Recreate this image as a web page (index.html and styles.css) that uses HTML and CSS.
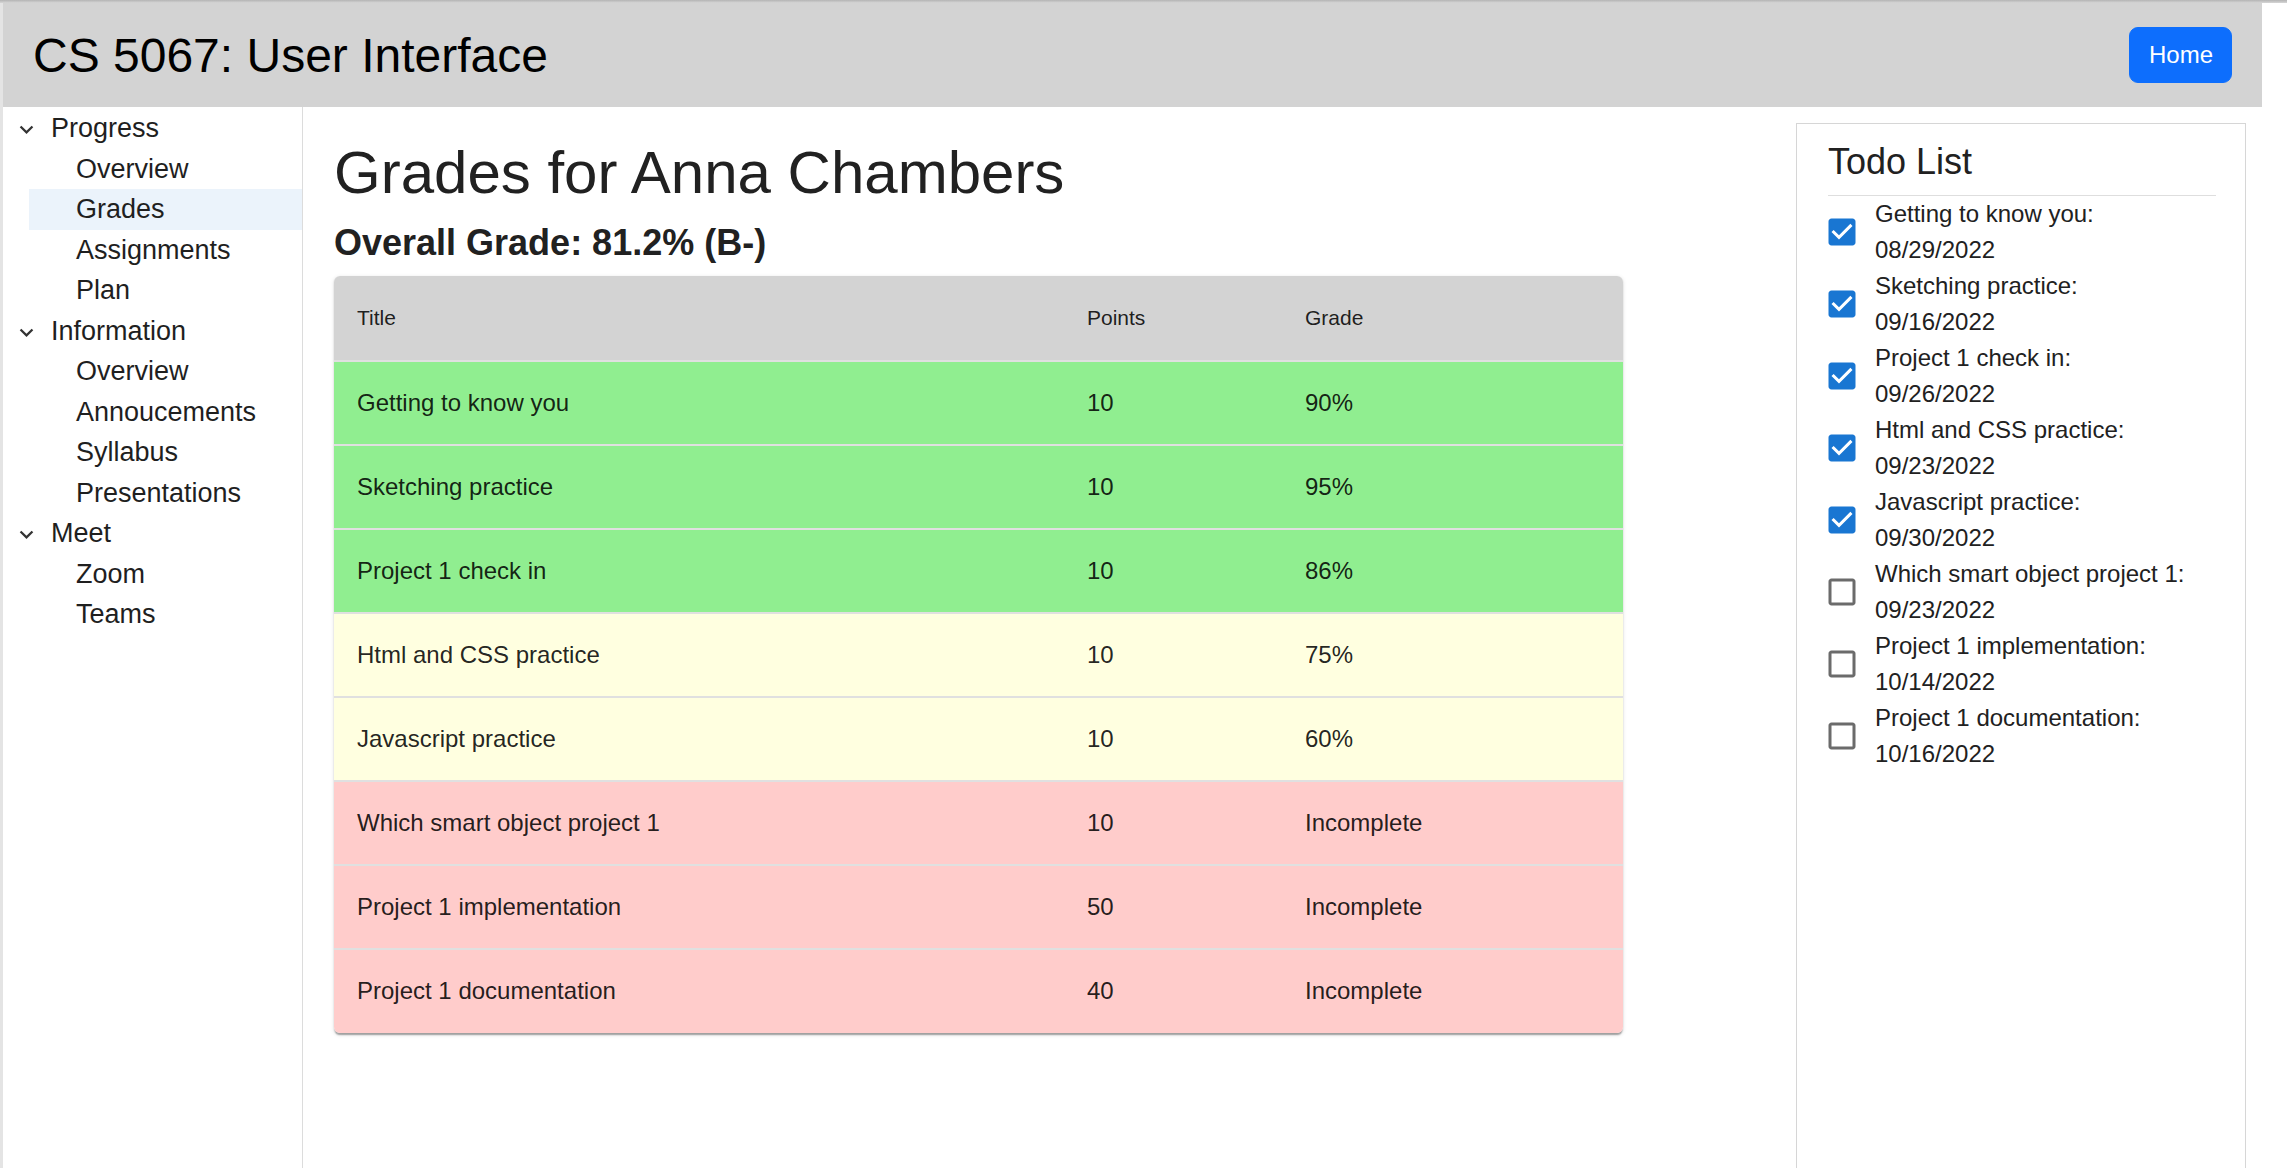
FILE: index.html
```html
<!DOCTYPE html>
<html lang="en">
<head>
<meta charset="utf-8">
<title>CS 5067: User Interface</title>
<link rel="stylesheet" href="styles.css">
</head>
<body>
<div class="topshade"></div>
<div class="frame">
  <div class="page">
    <header class="appbar">
      <h2 class="app-title">CS 5067: User Interface</h2>
      <button class="btn-home">Home</button>
    </header>
    <div class="layout">
      <nav class="sidebar">
        <div class="tree-group">
          <div class="tree-head"><svg class="chev" viewBox="0 0 24 24"><path d="M16.59 8.59 12 13.17 7.41 8.59 6 10l6 6 6-6z"/></svg><span>Progress</span></div>
          <div class="tree-item">Overview</div>
          <div class="tree-item selected">Grades</div>
          <div class="tree-item">Assignments</div>
          <div class="tree-item">Plan</div>
        </div>
        <div class="tree-group">
          <div class="tree-head"><svg class="chev" viewBox="0 0 24 24"><path d="M16.59 8.59 12 13.17 7.41 8.59 6 10l6 6 6-6z"/></svg><span>Information</span></div>
          <div class="tree-item">Overview</div>
          <div class="tree-item">Annoucements</div>
          <div class="tree-item">Syllabus</div>
          <div class="tree-item">Presentations</div>
        </div>
        <div class="tree-group">
          <div class="tree-head"><svg class="chev" viewBox="0 0 24 24"><path d="M16.59 8.59 12 13.17 7.41 8.59 6 10l6 6 6-6z"/></svg><span>Meet</span></div>
          <div class="tree-item">Zoom</div>
          <div class="tree-item">Teams</div>
        </div>
      </nav>
      <main class="content">
        <h1 class="page-title">Grades for Anna Chambers</h1>
        <h4 class="overall">Overall Grade: 81.2% (B-)</h4>
        <div class="paper">
          <table class="grades">
            <colgroup><col class="c1"><col class="c2"><col class="c3"></colgroup>
            <thead>
              <tr><th>Title</th><th>Points</th><th>Grade</th></tr>
            </thead>
            <tbody>
              <tr class="good"><td>Getting to know you</td><td>10</td><td>90%</td></tr>
              <tr class="good"><td>Sketching practice</td><td>10</td><td>95%</td></tr>
              <tr class="good"><td>Project 1 check in</td><td>10</td><td>86%</td></tr>
              <tr class="ok"><td>Html and CSS practice</td><td>10</td><td>75%</td></tr>
              <tr class="ok"><td>Javascript practice</td><td>10</td><td>60%</td></tr>
              <tr class="bad"><td>Which smart object project 1</td><td>10</td><td>Incomplete</td></tr>
              <tr class="bad"><td>Project 1 implementation</td><td>50</td><td>Incomplete</td></tr>
              <tr class="bad"><td>Project 1 documentation</td><td>40</td><td>Incomplete</td></tr>
            </tbody>
          </table>
        </div>
      </main>
      <aside class="todo">
        <h4 class="todo-title">Todo List</h4>
        <hr class="todo-rule">
        <ul class="todo-list">
          <li class="todo-item"><svg class="cb on" viewBox="0 0 24 24"><path d="M19 3H5c-1.11 0-2 .9-2 2v14c0 1.1.89 2 2 2h14c1.11 0 2-.9 2-2V5c0-1.1-.89-2-2-2zm-9 14l-5-5 1.41-1.41L10 14.17l7.59-7.59L19 8l-9 9z"/></svg><span class="todo-text"><span class="line">Getting to know you:</span><span class="line">08/29/2022</span></span></li>
          <li class="todo-item"><svg class="cb on" viewBox="0 0 24 24"><path d="M19 3H5c-1.11 0-2 .9-2 2v14c0 1.1.89 2 2 2h14c1.11 0 2-.9 2-2V5c0-1.1-.89-2-2-2zm-9 14l-5-5 1.41-1.41L10 14.17l7.59-7.59L19 8l-9 9z"/></svg><span class="todo-text"><span class="line">Sketching practice:</span><span class="line">09/16/2022</span></span></li>
          <li class="todo-item"><svg class="cb on" viewBox="0 0 24 24"><path d="M19 3H5c-1.11 0-2 .9-2 2v14c0 1.1.89 2 2 2h14c1.11 0 2-.9 2-2V5c0-1.1-.89-2-2-2zm-9 14l-5-5 1.41-1.41L10 14.17l7.59-7.59L19 8l-9 9z"/></svg><span class="todo-text"><span class="line">Project 1 check in:</span><span class="line">09/26/2022</span></span></li>
          <li class="todo-item"><svg class="cb on" viewBox="0 0 24 24"><path d="M19 3H5c-1.11 0-2 .9-2 2v14c0 1.1.89 2 2 2h14c1.11 0 2-.9 2-2V5c0-1.1-.89-2-2-2zm-9 14l-5-5 1.41-1.41L10 14.17l7.59-7.59L19 8l-9 9z"/></svg><span class="todo-text"><span class="line">Html and CSS practice:</span><span class="line">09/23/2022</span></span></li>
          <li class="todo-item"><svg class="cb on" viewBox="0 0 24 24"><path d="M19 3H5c-1.11 0-2 .9-2 2v14c0 1.1.89 2 2 2h14c1.11 0 2-.9 2-2V5c0-1.1-.89-2-2-2zm-9 14l-5-5 1.41-1.41L10 14.17l7.59-7.59L19 8l-9 9z"/></svg><span class="todo-text"><span class="line">Javascript practice:</span><span class="line">09/30/2022</span></span></li>
          <li class="todo-item"><svg class="cb off" viewBox="0 0 24 24"><path d="M19 5v14H5V5h14m0-2H5c-1.1 0-2 .9-2 2v14c0 1.1.9 2 2 2h14c1.1 0 2-.9 2-2V5c0-1.1-.9-2-2-2z"/></svg><span class="todo-text"><span class="line">Which smart object project 1:</span><span class="line">09/23/2022</span></span></li>
          <li class="todo-item"><svg class="cb off" viewBox="0 0 24 24"><path d="M19 5v14H5V5h14m0-2H5c-1.1 0-2 .9-2 2v14c0 1.1.9 2 2 2h14c1.1 0 2-.9 2-2V5c0-1.1-.9-2-2-2z"/></svg><span class="todo-text"><span class="line">Project 1 implementation:</span><span class="line">10/14/2022</span></span></li>
          <li class="todo-item"><svg class="cb off" viewBox="0 0 24 24"><path d="M19 5v14H5V5h14m0-2H5c-1.1 0-2 .9-2 2v14c0 1.1.9 2 2 2h14c1.1 0 2-.9 2-2V5c0-1.1-.9-2-2-2z"/></svg><span class="todo-text"><span class="line">Project 1 documentation:</span><span class="line">10/16/2022</span></span></li>
        </ul>
      </aside>
    </div>
  </div>
</div>
</body>
</html>
```
FILE: styles.css
```css
* { box-sizing: border-box; }
html, body { margin: 0; padding: 0; }
body {
  font-family: "Liberation Sans", Arial, sans-serif;
  color: #212529;
  background: #fff;
  width: 2287px;
  height: 1168px;
  overflow: hidden;
}
.topshade {
  height: 3px;
  background: linear-gradient(to bottom, #b4b4b4, #d6d6d6);
}
.frame {
  display: flex;
  height: 1165px;
}
.page {
  width: 2262px;
  border-left: 3px solid #e4e4e4;
  display: flex;
  flex-direction: column;
}
.appbar {
  height: 104px;
  background: #d3d3d3;
  display: flex;
  align-items: center;
  justify-content: space-between;
  padding: 0 30px 0 30px;
  flex-shrink: 0;
}
.app-title {
  margin: 2px 0 0;
  font-size: 48px;
  font-weight: 400;
  line-height: 1.2;
  color: #000;
}
.btn-home {
  font-family: "Liberation Sans", Arial, sans-serif;
  font-size: 24px;
  line-height: 36px;
  color: #fff;
  background: #0d6efd;
  border: 1px solid #0d6efd;
  border-radius: 9px;
  padding: 9px 19px;
  width: 103px;
  height: 56px;
}
.layout {
  flex: 1;
  display: flex;
  min-height: 0;
}
.sidebar {
  width: 300px;
  flex-shrink: 0;
  border-right: 1px solid #dcdcdc;
  color: #1f1f1f;
  font-size: 27px;
  line-height: 40.5px;
  padding-top: 1px;
}
.tree-head {
  display: flex;
  align-items: center;
  height: 40.5px;
  padding-left: 10px;
}
.chev {
  width: 27px;
  height: 27px;
  fill: #333;
  margin-right: 11px;
  margin-top: 3px;
}
.tree-item {
  height: 40.5px;
  margin-left: 26px;
  padding-left: 47px;
}
.tree-item.selected {
  background: #ebf3fb;
}
.content {
  flex: 1;
  padding: 30px 0 0 31px;
}
.page-title {
  margin: 0 0 12px;
  font-size: 60px;
  font-weight: 400;
  line-height: 1.2;
  color: #212121;
}
.overall {
  margin: 0 0 12px;
  font-size: 36px;
  font-weight: 700;
  line-height: 1.2;
  color: #212121;
}
.paper {
  width: 1289px;
  border-radius: 6px;
  overflow: hidden;
  box-shadow: 0 3px 1.5px -1.5px rgba(0,0,0,0.2), 0 1.5px 1.5px 0 rgba(0,0,0,0.14), 0 1.5px 4.5px 0 rgba(0,0,0,0.12);
}
.grades {
  width: 100%;
  border-collapse: collapse;
  table-layout: fixed;
  color: rgba(0,0,0,0.87);
}
.grades .c1 { width: 730px; }
.grades .c2 { width: 218px; }
.grades .c3 { width: 341px; }
.grades th {
  background: #d3d3d3;
  font-weight: 400;
  font-size: 21px;
  line-height: 36px;
  text-align: left;
  padding: 24px 23px;
  border-bottom: 2px solid #e0e0e0;
}
.grades td {
  font-size: 24px;
  line-height: 33.9px;
  padding: 24px 23px 24px;
  border-bottom: 2px solid #e0e0e0;
}
.grades tbody tr:last-child td { border-bottom: none; padding-bottom: 26px; }
.grades tr.good td { background: #90ee90; }
.grades tr.ok td { background: #ffffe0; }
.grades tr.bad td { background: #ffcccb; }
.todo {
  width: 450px;
  flex-shrink: 0;
  margin: 16px 16px 0 0;
  border: 1px solid #d6d6d6;
  border-bottom: none;
  padding: 16px 29px 0 31px;
  color: #212121;
}
.todo-title {
  margin: 0;
  font-size: 36px;
  font-weight: 400;
  line-height: 1.2;
}
.todo-rule {
  margin: 12px 0 0;
  border: 0;
  border-top: 1px solid #dedede;
  height: 0;
}
.todo-list {
  list-style: none;
  margin: 0;
  padding: 0;
}
.todo-item {
  display: flex;
  align-items: center;
  font-size: 24px;
  line-height: 36px;
}
.cb {
  width: 36px;
  height: 36px;
  flex-shrink: 0;
  margin-left: -4.5px;
  margin-right: 15.5px;
}
.cb.on { fill: #1976d2; }
.cb.off { fill: #6b6b6b; }
.todo-text .line { display: block; }
```
